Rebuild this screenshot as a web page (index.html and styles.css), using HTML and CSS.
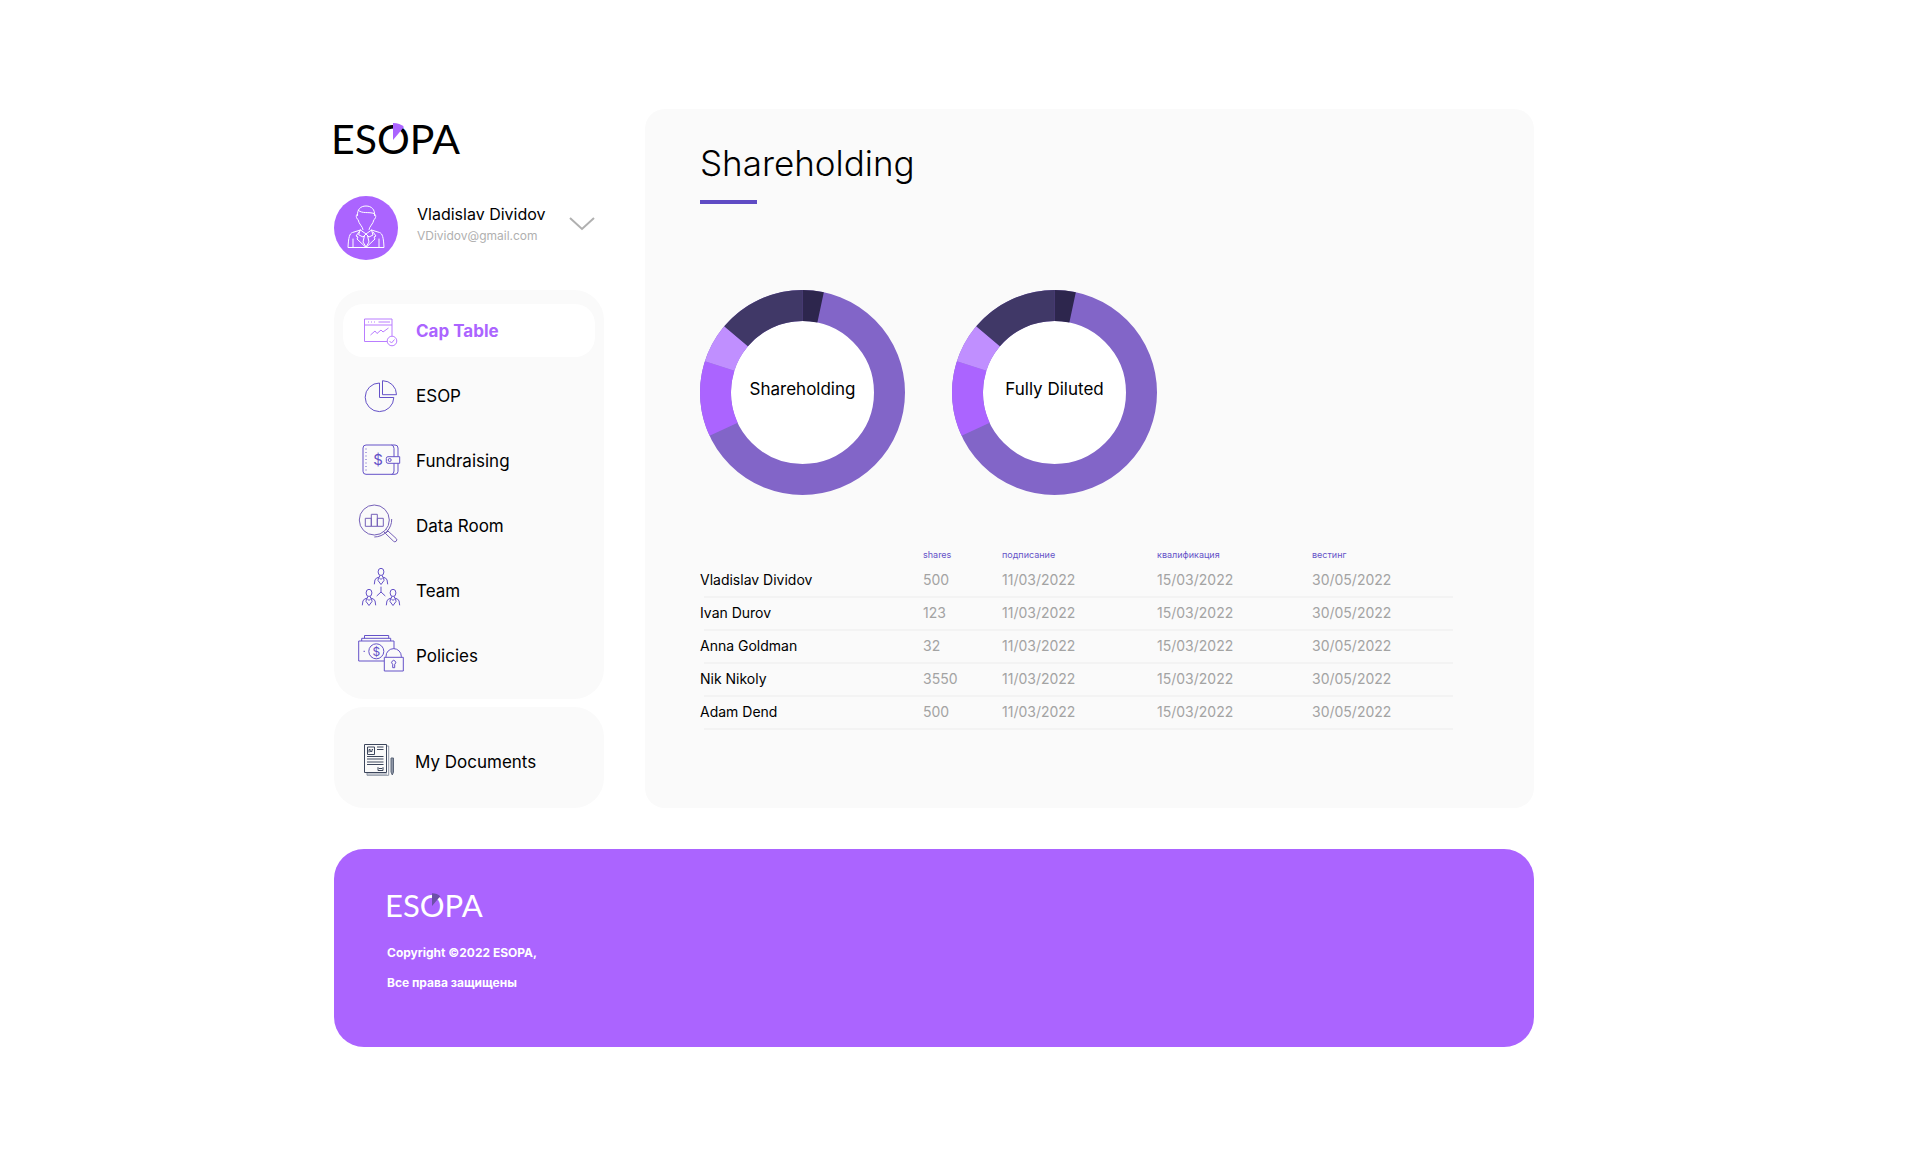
FILE: index.html
```html
<!DOCTYPE html>
<html lang="en">
<head>
<meta charset="utf-8">
<meta name="viewport" content="width=device-width, initial-scale=1">
<title>ESOPA – Shareholding</title>
<link rel="stylesheet" href="styles.css">
</head>
<body>
<div class="page">
  <aside class="sidebar">
    <a class="logo" href="#">ES<span class="logo-o">O<svg class="logo-wedge" viewBox="0 0 12 17" aria-hidden="true"><path d="M0 0Q7 0 11 4L0 17z" fill="currentColor"/></svg></span>PA</a>

    <button class="profile" type="button">
      <svg class="avatar" viewBox="0 0 64 64" aria-hidden="true">
        <circle cx="32" cy="32" r="32" fill="#ab64ff"/>
        <g fill="none" stroke="#fff" stroke-linejoin="round" stroke-linecap="round">
          <path d="M23.5 19.5c-.5-6 3-9.5 8.500-9.500s9.200 3.500 8.500 9.500M24.500 14.500c4 3.500 10 1 15.500 3M23.500 18c-2 .5-1.500 4.500.5 5.500 1 5 4.500 6.500 5 10M40.500 18c2 .5 1.500 4.500-.5 5.500-1 5-4.500 6.500-5 10"/>
          <path d="M26.500 34l-8 2.500c-3 1-4 5-4.500 15h36c-.5-10-1.500-14-4.500-15l-8-2.500M19 51V43M45 51V43"/>
          <path d="M26.500 34L32 38l5.500-4 1.500 5-4 2-3-3-3 3-4-2zM25 36l-3 4 2 1-1 2 9 8.500 9-8.500-1-2 2-1-3-4M30.500 39.500L29 46l3 5 3-5-1.500-6.500"/>
        </g>
      </svg>
      <span class="profile-text">
        <span class="profile-name">Vladislav Dividov</span>
        <span class="profile-mail">VDividov@gmail.com</span>
      </span>
      <svg class="chevron" viewBox="0 0 26 14" aria-hidden="true"><path d="M1 1l12 11L25 1" fill="none" stroke="#b0b0b0" stroke-width="2"/></svg>
    </button>

    <nav class="menu">
      <a class="item active" href="#">
        <svg class="icon" viewBox="0 0 46 46" aria-hidden="true">
          <path d="M29 33.500H6.500V11H34v17M6.500 17H34M20.500 14H32M12.500 27l4.500-4 2 2.500 4-3.500 2 2 5.500-4"/>
          <path d="M10 14h1M13 14h1M16 14h1"/>
          <circle cx="34" cy="33" r="4.800"/><path d="M31.500 33l2 2 3-3.500"/>
        </svg>Cap Table</a>
      <a class="item" href="#">
        <svg class="icon" viewBox="0 0 46 46" aria-hidden="true">
          <path d="M21.500 10a14.300 14.300 0 1 0 14.300 14.500H21.500zM24.500 7.700v14h14a14 14 0 0 0-14-14z"/>
        </svg>ESOP</a>
      <a class="item" href="#">
        <svg class="icon" viewBox="0 0 46 46" aria-hidden="true">
          <rect x="5" y="7" width="35" height="29.300" rx="3"/>
          <path d="M33.500 7q2.500.5 2.500 3.500v22.500q0 3-2.500 3.500"/>
          <path d="M8 10.500v23" stroke-dasharray="1 2.500"/>
          <path class="cover" d="M41.700 18.700H30a1.700 1.700 0 0 0-1.700 1.700v3.200A1.700 1.700 0 0 0 30 25.300h11.700z"/>
          <circle cx="31.700" cy="22" r="1.500"/>
          <text class="coin" x="20" y="27" font-size="15">$</text>
        </svg>Fundraising</a>
      <a class="item" href="#">
        <svg class="icon dim" viewBox="0 0 46 46" aria-hidden="true">
          <circle cx="16.300" cy="17" r="15"/>
          <path d="M7.300 15.300h6v8h-6zM13.300 11.300h6v12h-6zM19.300 15.300h6v8h-6z"/>
          <path d="M33.700 16a17.500 17.500 0 0 1-17.400 18M27.500 30.500l2.500-2.500 8.200 7.500a1.900 1.900 0 0 1-2.700 2.700zM30 28l-1.500-1.500M27.500 30.500L26 29"/>
        </svg>Data Room</a>
      <a class="item" href="#">
        <svg class="icon" viewBox="0 0 46 46" aria-hidden="true">
          <defs><g id="member">
            <ellipse cx="23" cy="3.900" rx="2.900" ry="3.600"/>
            <path d="M21.500 7.500v1.500l-3 1q-2 .8-2.200 6.300M24.500 7.500v1.500l3 1q2 .8 2.200 6.300M20.500 9.500l-.5 3 3 4 3-4-.5-3M21 9.500l2 2 2-2"/>
          </g></defs>
          <use href="#member"/><use href="#member" x="-12" y="21"/><use href="#member" x="12" y="21"/>
          <path d="M23 18.700V24l-4.300 4M23 24l4.300 4"/>
        </svg>Team</a>
      <a class="item" href="#">
        <svg class="icon" viewBox="0 0 46 46" aria-hidden="true">
          <path d="M6.500 5.300V2.500h24.200v2.800M3.700 8V5.300h29V8M26 28H.7V8H36v8"/>
          <circle cx="18.300" cy="18.300" r="7.500"/>
          <text class="coin" x="18.300" y="22.500" font-size="12">$</text>
          <path d="M5.500 18.300H7"/>
          <path d="M28 24.300v-1a7.600 7.600 0 0 1 15.300 0v1M26.300 24.300h19V38h-19z"/>
          <path d="M34.700 31.200a2 2 0 1 1 2 0v3.500h-2z"/>
        </svg>Policies</a>
    </nav>

    <nav class="menu documents">
      <a class="item" href="#">
        <svg class="icon" viewBox="0 0 46 46" aria-hidden="true">
          <g stroke="#8e96a6"><path d="M28.500 7H30.700V36.300H9V34M9 35h20" /></g>
          <g stroke="#3c465c">
            <path d="M6.500 5.500h22v28h-22z"/>
            <path d="M9.500 8h7v7.500h-7zM11 13.500v-3h1.200v2h1.800v-2h1M19 8h6.500M19 10.500h6.500M9 17.500h16.500M9 20h16.500M9 23h16.500M9 25.500h16.500"/>
            <path d="M20 28.500l1 1h3l1-1v3h-5z"/>
          </g>
          <path d="M33 19h2.500v14l-1.200 3-1.300-3z" fill="#8e96a6" stroke="#5c6679"/>
        </svg>My Documents</a>
    </nav>
  </aside>

  <main class="panel">
    <h1 class="title">Shareholding</h1>

    <section class="charts">
      <figure class="donut">
        <svg viewBox="0 0 205 205" aria-hidden="true">
          <circle class="slice s1" cx="102.500" cy="102.500" r="87"/>
          <path class="slice s2" d="M23.650 139.300A87 87 0 0 1 19.700 75.900"/>
          <path class="slice s3" d="M19.700 75.900A87 87 0 0 1 36.050 46.350"/>
          <path class="slice s4" d="M36.050 46.350A87 87 0 0 1 102.500 15.500"/>
          <path class="slice s5" d="M102.500 15.500A87 87 0 0 1 120.600 17.400"/>
        </svg>
        <figcaption>Shareholding</figcaption>
      </figure>
      <figure class="donut">
        <svg viewBox="0 0 205 205" aria-hidden="true">
          <circle class="slice s1" cx="102.500" cy="102.500" r="87"/>
          <path class="slice s2" d="M23.650 139.300A87 87 0 0 1 19.700 75.900"/>
          <path class="slice s3" d="M19.700 75.900A87 87 0 0 1 36.050 46.350"/>
          <path class="slice s4" d="M36.050 46.350A87 87 0 0 1 102.500 15.500"/>
          <path class="slice s5" d="M102.500 15.500A87 87 0 0 1 120.600 17.400"/>
        </svg>
        <figcaption>Fully Diluted</figcaption>
      </figure>
    </section>

    <table class="holders">
      <colgroup><col class="c-name"><col class="c-shares"><col class="c-date"><col class="c-date"><col></colgroup>
      <thead><tr><td></td><th scope="col">shares</th><th scope="col">подписание</th><th scope="col">квалификация</th><th scope="col">вестинг</th></tr></thead>
      <tbody>
        <tr><th scope="row">Vladislav Dividov</th><td>500</td><td>11/03/2022</td><td>15/03/2022</td><td>30/05/2022</td></tr>
        <tr><th scope="row">Ivan Durov</th><td>123</td><td>11/03/2022</td><td>15/03/2022</td><td>30/05/2022</td></tr>
        <tr><th scope="row">Anna Goldman</th><td>32</td><td>11/03/2022</td><td>15/03/2022</td><td>30/05/2022</td></tr>
        <tr><th scope="row">Nik Nikoly</th><td>3550</td><td>11/03/2022</td><td>15/03/2022</td><td>30/05/2022</td></tr>
        <tr><th scope="row">Adam Dend</th><td>500</td><td>11/03/2022</td><td>15/03/2022</td><td>30/05/2022</td></tr>
      </tbody>
    </table>
  </main>

  <footer class="footer">
    <a class="logo logo-small" href="#">ES<span class="logo-o">O<svg class="logo-wedge" viewBox="0 0 12 17" aria-hidden="true"><path d="M0 0Q7 0 11 4L0 17z" fill="currentColor"/></svg></span>PA</a>
    <p>Copyright ©2022 ESOPA,</p>
    <p>Все права защищены</p>
  </footer>
</div>
</body>
</html>
```
FILE: styles.css
```css
* { box-sizing: border-box; }

body {
  margin: 0;
  padding: 109px 0 101px;
  display: grid;
  grid-template-columns: 334fr 1200fr 386fr;
  background: #fff;
  color: #000;
  font-family: Inter, "Open Sans", sans-serif;
  font-size: 14px;
}

a { color: inherit; text-decoration: none; }

.page {
  grid-column: 2;
  display: grid;
  grid-template-columns: 270px minmax(0, 1fr);
  gap: 41px;
}

/* Sidebar */
.sidebar { display: flex; flex-direction: column; }

.logo {
  align-self: flex-start;
  margin-left: -3px;
  font-family: Lato, sans-serif;
  font-size: 41px;
  line-height: 60px;
}
.logo-o { position: relative; }
.logo-wedge {
  position: absolute;
  left: 50%;
  top: 9px;
  width: 12px;
  height: 17px;
  color: #ab64ff;
}

.profile {
  display: flex;
  align-items: center;
  margin: 27px 0 30px;
  padding: 0 9px 0 0;
  border: 0;
  background: none;
  color: inherit;
  font: inherit;
  text-align: left;
}
.avatar { width: 64px; height: 64px; }
.profile-text { flex: 1; display: grid; padding: 0 0 8px 19px; }
.profile-name { font-size: 16px; line-height: 24px; }
.profile-mail { font-size: 12px; line-height: 20px; color: #b0b0b0; }
.chevron { width: 26px; height: 14px; margin-bottom: 8px; }

.menu {
  display: grid;
  gap: 12px;
  padding: 14px 9px 17px;
  border-radius: 30px;
  background: #fafafa;
}
.documents { margin-top: 8px; padding: 28px 9px 20px; }

.item {
  display: flex;
  align-items: center;
  gap: 12px;
  height: 53px;
  padding-left: 15px;
  border-radius: 20px;
  font-size: 17px;
}
.documents .item { gap: 11px; }
.item.active { background: #fff; color: #ab64ff; font-weight: 700; }

.icon {
  width: 46px;
  height: 46px;
  flex: none;
  fill: none;
  stroke: #6552c8;
  overflow: visible;
}
.icon.dim { stroke: #7560b8; }
.active .icon { stroke: #b97dff; }
.cover { fill: #fafafa; }
.coin { fill: #6552c8; stroke: none; text-anchor: middle; font-weight: 400; }

/* Main panel */
.panel {
  padding: 34px 81px 77px 55px;
  border-radius: 20px;
  background: #fafafa;
}
.title {
  margin: 0;
  font-size: 35px;
  line-height: 40px;
  font-weight: 300;
}
.title::after {
  content: "";
  display: block;
  width: 57px;
  height: 4px;
  margin-top: 17px;
  background: #5f4bc4;
}

.charts { display: flex; gap: 47px; margin-top: 86px; }
.donut {
  display: grid;
  place-items: center;
  width: 205px;
  height: 205px;
  margin: 0;
  border-radius: 50%;
  background: radial-gradient(#fff 80px, transparent 81px);
}
.donut > * { grid-area: 1 / 1; }
.donut figcaption { padding-bottom: 7px; font-size: 17px; }
.slice { fill: none; stroke-width: 31; }
.s1 { stroke: #8265c8; }
.s2 { stroke: #ab64ff; }
.s3 { stroke: #c08fff; }
.s4 { stroke: #403867; }
.s5 { stroke: #2d264d; }

.holders {
  width: 100%;
  margin-top: 52px;
  table-layout: fixed;
  border-collapse: collapse;
}
.c-name { width: 223px; }
.c-shares { width: 79px; }
.c-date { width: 155px; }
.holders th, .holders td { padding: 0; font-weight: 400; text-align: left; }
.holders thead tr { height: 18px; }
.holders thead th {
  font-size: 9px;
  line-height: 16px;
  vertical-align: top;
  color: #6552c8;
}
.holders tbody tr {
  height: 33px;
  background: linear-gradient(#f3f3f3, #f3f3f3) 4px 100% / 100% 2px no-repeat;
}
.holders tbody th, .holders tbody td { padding-bottom: 4px; }
.holders tbody td { color: #a3a3a3; }

/* Footer */
.footer {
  grid-column: 1 / -1;
  display: flex;
  flex-direction: column;
  padding: 34px 53px 49px;
  border-radius: 30px;
  background: #ab64ff;
  color: #fff;
  font-size: 12px;
  font-weight: 700;
}
.logo-small {
  margin: 0 0 10px -2px;
  font-size: 31px;
  font-weight: 400;
  line-height: 45px;
}
.logo-small .logo-wedge { top: 7px; width: 9px; height: 13px; color: #6c4fa8; }
.footer p { margin: 0; line-height: 30px; }
```
